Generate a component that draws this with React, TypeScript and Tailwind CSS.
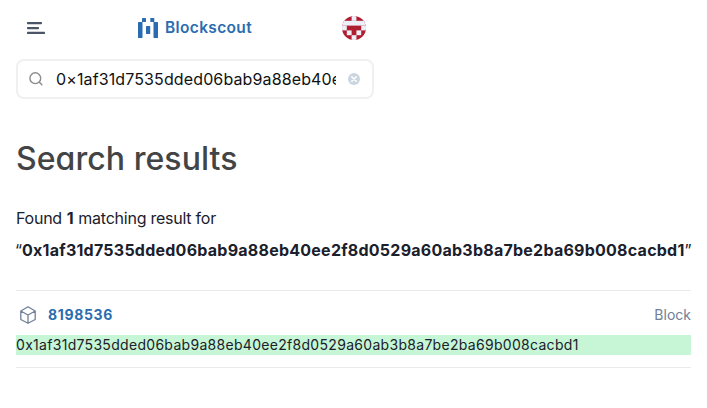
const HASH = '0x1af31d7535dded06bab9a88eb40ee2f8d0529a60ab3b8a7be2ba69b008cacbd1';
const QUERY = '0×1af31d7535dded06bab9a88eb40e';

function MenuIcon() {
  return (
    <svg className="ml-[10px] h-5 w-5" viewBox="0 0 20 20" fill="#4a5568">
      <rect x="1" y="4" width="15" height="2.3" rx=".7" />
      <rect x="1" y="9" width="12" height="2.3" rx=".7" />
      <rect x="1" y="13.8" width="18" height="2.3" rx=".7" />
    </svg>
  );
}

function Logo() {
  return (
    <div className="ml-[3px] flex items-center">
      <svg className="h-5 w-5" viewBox="0 0 20 20" fill="#2b6cb0">
        <rect x="4" y="0" width="4" height="4" rx=".6" />
        <rect x="12.3" y="0" width="4" height="4" rx=".6" />
        <rect x="0" y="4" width="4.5" height="16" rx=".6" />
        <rect x="8" y="8" width="4.2" height="8" rx=".6" />
        <rect x="15.5" y="4" width="4.5" height="16" rx=".6" />
      </svg>
      <span className="ml-[7px] w-[88px] whitespace-nowrap text-[15.5px] leading-5 font-semibold tracking-[0.35px] text-[#2b6cb0]">
        Blockscout
      </span>
    </div>
  );
}

function Identicon() {
  return (
    <svg className="mr-2 h-6 w-6 rounded-full" viewBox="0 0 24 24">
      <rect width="24" height="24" fill="#b01c30" />
      <g fill="#edf0f8">
        <rect x="9.6" y="0" width="4.8" height="4.8" />
        <rect x="0" y="4.8" width="24" height="4.8" />
        <rect x="0" y="9.6" width="4.8" height="4.8" />
        <rect x="19.2" y="9.6" width="4.8" height="4.8" />
        <rect x="4.8" y="14.4" width="4.8" height="4.8" />
        <rect x="14.4" y="14.4" width="4.8" height="4.8" />
        <rect x="9.6" y="19.2" width="4.8" height="4.8" />
      </g>
    </svg>
  );
}

function SearchBox() {
  return (
    <div className="mt-[3px] flex h-10 items-center rounded-lg border-2 border-[#f0f0f0] pr-3 pl-[10px]">
      <svg className="h-4 w-4 shrink-0" viewBox="0 0 16 16" fill="none" stroke="#8c8c8c" strokeWidth="1.4" strokeLinecap="round">
        <circle cx="7.3" cy="7.2" r="5.4" />
        <path d="m11.4 11.3 2.5 2.5" />
      </svg>
      <div className="ml-3 w-[280px] overflow-hidden text-base tracking-[0.12px] whitespace-nowrap text-[#101112]">{QUERY}</div>
      <svg className="ml-auto h-3 w-3 shrink-0" viewBox="0 0 12 12">
        <circle cx="6" cy="6" r="6" fill="#cbd5e0" />
        <path d="m3.8 3.8 4.4 4.4m0-4.4L3.8 8.2" stroke="#fff" strokeWidth="1.6" strokeLinecap="round" />
      </svg>
    </div>
  );
}

function BlockIcon() {
  return (
    <svg className="ml-1 h-[18px] w-4" viewBox="0 0 16 18" fill="none" stroke="#718096" strokeWidth="1.3" strokeLinejoin="round">
      <path d="M8 .8 15.2 5v8.5L8 17.3.8 13.5V5L8 .8ZM.8 5 8 9l7.2-4M8 9v8.3" />
    </svg>
  );
}

export default function App() {
  return (
    <div className="h-[408px] w-[707px] overflow-hidden bg-white px-4 font-['Inter',sans-serif] text-[#1a202c]">
      <div className="w-[358px]">
        <header className="flex h-14 items-center justify-between">
          <MenuIcon />
          <Logo />
          <Identicon />
        </header>
        <SearchBox />
      </div>
      <h1 className="mt-10 text-[32px] leading-10 font-medium tracking-[0.06px] text-[#434445] [font-feature-settings:'cv11']">
        Search results
      </h1>
      <p className="mt-[23px] text-base leading-8 whitespace-nowrap [font-feature-settings:'calt'_0]">
        <span className="tracking-[-0.24px]">
          Found <b className="mx-[0.6px] font-bold">1</b> matching result for
        </span>
        <br />
        <span className="-ml-px">“</span>
        <b className="font-bold tracking-[0.245px]">{HASH}</b>”
      </p>
      <section className="mt-6 border-y border-[#e9eaeb] py-3 text-sm">
        <div className="flex h-6 items-center">
          <BlockIcon />
          <a className="ml-3 font-bold tracking-[0.65px] text-[#2b6cb0]">8198536</a>
          <span className="ml-auto text-[#718096]">Block</span>
        </div>
        <div className="mt-2 h-5 bg-[#c6f6d5] leading-5 tracking-[0.3px] [font-feature-settings:'calt'_0]">{HASH}</div>
      </section>
    </div>
  );
}
